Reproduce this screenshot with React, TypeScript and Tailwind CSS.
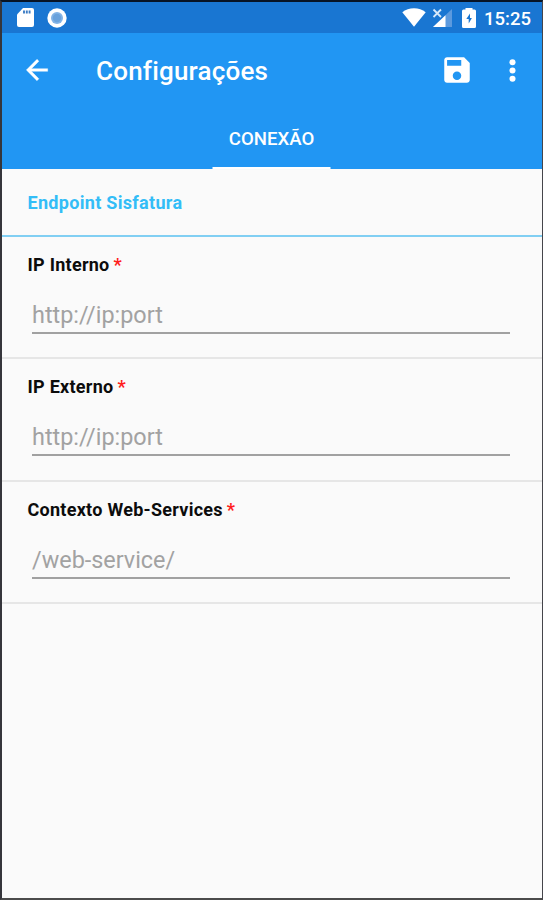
import React from "react";

function SdCard() {
  return (
    <svg className="ml-[15px] h-[19px] w-[17px]" viewBox="0 0 17 19" fill="none">
      <path d="M6 0h9a2 2 0 0 1 2 2v15a2 2 0 0 1-2 2H2a2 2 0 0 1-2-2V6.500z" fill="#fff" />
      <path d="M7 2.500v3M9.800 2.500v3M12.600 2.500v3" stroke="#3c7cc4" strokeWidth="1.900" />
    </svg>
  );
}

function SyncCircle() {
  return (
    <svg className="ml-[12.500px] size-5" viewBox="0 0 20 20">
      <circle cx="10" cy="10" r="9.700" fill="#fff" />
      <circle cx="10" cy="10" r="6" fill="#82b3e6" />
      <circle cx="10" cy="10" r="4.200" fill="#6aa2dc" />
    </svg>
  );
}

function Wifi() {
  return (
    <svg className="h-[19px] w-6" viewBox="0 0 24 19" fill="#fff">
      <path d="M12 18.700 0.300 4.300C3.500 1.600 7.500 0.200 12 0.200s8.500 1.400 11.700 4.100z" />
    </svg>
  );
}

function Signal() {
  return (
    <svg className="ml-[6px] h-5 w-[21px]" viewBox="0 0 21 20">
      <path d="M20 1v18H1z" fill="#5c9ade" />
      <path d="M13.500 7.200V19H1z" fill="#fff" />
      <path d="m1.500 1.500 7.500 7.500m0-7.500-7.500 7.500" stroke="#d5e8fa" strokeWidth="1.800" />
    </svg>
  );
}

function Battery() {
  return (
    <svg className="ml-[9px] h-5 w-[14px]" viewBox="0 0 14 20">
      <path d="M3.500 0h7v1.500H12.500A1.500 1.500 0 0 1 14 3v15.500a1.500 1.500 0 0 1-1.500 1.500h-11A1.500 1.500 0 0 1 0 18.500V3A1.500 1.500 0 0 1 1.500 1.500h2z" fill="#fff" />
      <path d="M8 5.500 4.300 11h2.400v4.500L9.900 10H8z" fill="#1976d2" />
    </svg>
  );
}

function Field({ label, hint }: { label: string; hint: string }) {
  return (
    <section className="h-[122.300px] shrink-0 border-b-2 border-[#e6e6e6] pl-[25.500px] pr-[32px]">
      <div className="pt-[16px] text-[18px] font-bold leading-6 tracking-[0.270px] text-[#0c0c0c]">
        {label}
        <span className="ml-[4px] text-[#ff1d1d]">*</span>
      </div>
      <div className="ml-[4.500px] mt-[20px] h-[37px] border-b-2 border-[#a1a1a1] text-[23.400px] leading-[37px] text-[#a2a2a2]">
        {hint}
      </div>
    </section>
  );
}

export default function App() {
  return (
    <div className="flex h-[900px] w-[543px] flex-col overflow-hidden border-b-2 border-l-2 border-r border-t-2 border-b-[#4b4b4b] border-l-[#35353b] border-r-[#45454b] border-t-[#071426] bg-[#fafafa] font-['Roboto','Liberation_Sans',sans-serif]">
      <div className="flex h-[31px] shrink-0 items-center bg-[#1976d2] text-white">
        <SdCard />
        <SyncCircle />
        <div className="ml-auto flex items-center pr-[11px]">
          <Wifi />
          <Signal />
          <Battery />
          <span className="ml-[8px] w-[47px] whitespace-nowrap pt-[2px] text-[18.500px] font-medium leading-5">15:25</span>
        </div>
      </div>
      <header className="h-[136px] shrink-0 bg-[#2196f3] text-white">
        <div className="flex h-[74px] items-center">
          <svg className="ml-[19px] size-8" viewBox="0 0 24 24" fill="#fff">
            <path d="M20 11H7.830l5.590-5.590L12 4l-8 8 8 8 1.410-1.410L7.830 13H20v-2z" stroke="#fff" strokeWidth="0.300" />
          </svg>
          <h1 className="ml-[43px] pt-[2px] text-[26px] font-medium leading-8 tracking-[0.200px]">Configurações</h1>
          <svg className="ml-auto size-[34px]" viewBox="0 0 24 24" fill="#fff">
            <path d="M17 3H5c-1.110 0-2 .9-2 2v14c0 1.100.890 2 2 2h14c1.100 0 2-.9 2-2V7l-4-4zm-5 16c-1.660 0-3-1.340-3-3s1.340-3 3-3 3 1.340 3 3-1.340 3-3 3zm3-10H5V5h10v4z" />
          </svg>
          <svg className="ml-[22px] mr-[13px] size-[33px]" viewBox="0 0 24 24" fill="#fff">
            <circle cx="12" cy="6" r="2.200" />
            <circle cx="12" cy="12" r="2.200" />
            <circle cx="12" cy="18" r="2.200" />
          </svg>
        </div>
        <div className="mx-auto h-[62px] w-[118px] -translate-x-[0.500px] border-b-2 border-white pt-[20px] text-center text-[18.600px] font-medium leading-6">
          CONEXÃO
        </div>
      </header>
      <h2 className="h-[68px] shrink-0 border-b-2 border-[#81cff3] pl-[25.500px] pt-[22px] text-[18px] font-bold leading-6 tracking-[0.310px] text-[#33bdf7]">
        Endpoint Sisfatura
      </h2>
      <Field label="IP Interno" hint="http://ip:port" />
      <Field label="IP Externo" hint="http://ip:port" />
      <Field label="Contexto Web-Services" hint="/web-service/" />
    </div>
  );
}
